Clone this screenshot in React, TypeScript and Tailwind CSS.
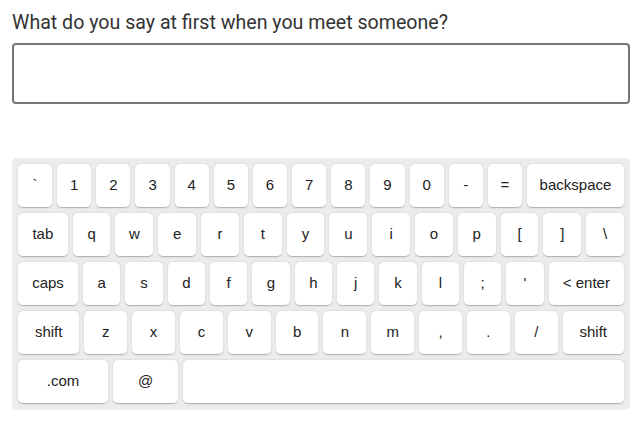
import React from "react";

const rows: string[][] = [
  ["`", "1", "2", "3", "4", "5", "6", "7", "8", "9", "0", "-", "=", "{bksp}"],
  ["{tab}", "q", "w", "e", "r", "t", "y", "u", "i", "o", "p", "[", "]", "\\"],
  ["{lock}", "a", "s", "d", "f", "g", "h", "j", "k", "l", ";", "'", "{enter}"],
  ["{shift}", "z", "x", "c", "v", "b", "n", "m", ",", ".", "/", "{shift}"],
];

const labels: Record<string, string> = {
  "{bksp}": "backspace",
  "{tab}": "tab",
  "{lock}": "caps",
  "{enter}": "< enter",
  "{shift}": "shift",
};

const keyBase =
  "h-[44px] flex items-center justify-center bg-white rounded-[5px] border-b border-[#b5b5b5] shadow-[0_0_3px_-1px_rgba(0,0,0,0.3)] text-[15px] text-[#222] select-none";

function Key({ k }: { k: string }) {
  const isFn = k in labels;
  return (
    <div
      className={`${keyBase} grow ${isFn ? "px-[6px] whitespace-nowrap" : "w-[21px] px-0"}`}
    >
      {isFn ? labels[k] : k}
    </div>
  );
}

export default function App() {
  return (
    <div className="w-[640px] h-[425px] bg-white pl-3 pr-[10px] pt-[9px]" style={{ fontFamily: "Roboto, sans-serif" }}>
      <h1 className="text-[19.6px] leading-[28px] text-[#333] font-normal">
        What do you say at first when you meet someone?
      </h1>
      <input
        type="text"
        className="mt-[6px] block w-full h-[61px] border-2 border-[#767676] rounded-[4px] outline-none px-3"
      />

      {/* Keyboard */}
      <div
        className="mt-[54px] bg-[#ececec] rounded-[5px] p-[6px] flex flex-col gap-[5px]"
        style={{ fontFamily: '"Liberation Sans", Arial, sans-serif' }}
      >
        {rows.map((row, i) => (
          <div key={i} className="flex gap-[5px]">
            {row.map((k, j) => (
              <Key key={j} k={k} />
            ))}
          </div>
        ))}
        <div className="flex gap-[5px]">
          <div className={`${keyBase} w-[90px] shrink-0`}>.com</div>
          <div className={`${keyBase} w-[65px] shrink-0`}>@</div>
          <div className={`${keyBase} flex-1`}></div>
        </div>
      </div>
    </div>
  );
}
